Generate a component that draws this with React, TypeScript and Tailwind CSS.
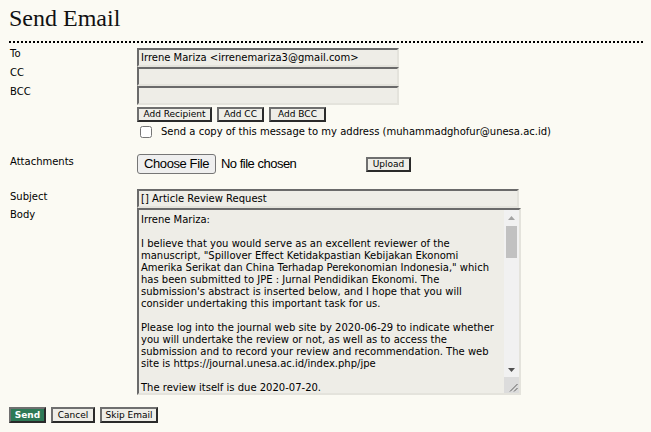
import { useState } from 'react';

const bodyText = `Irrene Mariza:

I believe that you would serve as an excellent reviewer of the
manuscript, "Spillover Effect Ketidakpastian Kebijakan Ekonomi
Amerika Serikat dan China Terhadap Perekonomian Indonesia," which
has been submitted to JPE : Jurnal Pendidikan Ekonomi. The
submission's abstract is inserted below, and I hope that you will
consider undertaking this important task for us.

Please log into the journal web site by 2020-06-29 to indicate whether
you will undertake the review or not, as well as to access the
submission and to record your review and recommendation. The web
site is https://journal.unesa.ac.id/index.php/jpe

The review itself is due 2020-07-20.

If you do not have your username and password for the journal's
web site, you can use this link to reset your password (which
will then be emailed to you along with your username).
https://journal.unesa.ac.id/index.php/jpe/login/resetPassword

Submission URL:
https://journal.unesa.ac.id/index.php/jpe/reviewer/submission

Thank you for considering this request.

Muhammad Ghofur
Universitas Negeri Surabaya
muhammadghofur@unesa.ac.id

"Spillover Effect Ketidakpastian Kebijakan Ekonomi Amerika
Serikat dan China Terhadap Perekonomian Indonesia"

Penelitian ini bertujuan untuk menganalisis spillover effect
ketidakpastian kebijakan ekonomi Amerika Serikat dan China
terhadap perekonomian Indonesia.
`;

const label = "w-[128px] shrink-0 pl-[1px] text-[10px] leading-[12px] text-black";
const field =
  "h-[19px] border-2 border-t-[#6a6a6a] border-l-[#6a6a6a] border-r-[#e4e3dc] border-b-[#e4e3dc] bg-[#eeede7] px-[2px] text-[10px] leading-[12px] text-black outline-none font-['DejaVu_Sans',sans-serif]";
const btn =
  "h-[15px] border-2 border-t-[#6f6f6f] border-l-[#6f6f6f] border-r-[#2a2a2a] border-b-[#2a2a2a] bg-[#eeede7] text-center text-[9px] leading-[11px] text-black font-['DejaVu_Sans',sans-serif]";

// fake classic scrollbar drawn over the textarea's right edge
function ScrollBar() {
  return (
    <div className="absolute top-[2px] bottom-[2px] right-[2px] flex w-[15px] flex-col bg-[#f1f1f1]">
      <div className="flex h-[15px] items-center justify-center">
        <svg width="7" height="4" viewBox="0 0 7 4">
          <path d="M3.5 0 L7 4 L0 4 Z" fill="#a3a3a3" />
        </svg>
      </div>
      <div className="flex-1 px-[2px] pt-[1px]">
        <div className="h-[32px] bg-[#c1c1c1]" />
      </div>
      <div className="flex h-[15px] items-center justify-center">
        <svg width="7" height="4" viewBox="0 0 7 4">
          <path d="M0 0 L7 0 L3.5 4 Z" fill="#505050" />
        </svg>
      </div>
      <div className="relative h-[16px] bg-[#dcdcdc]">
        <svg className="absolute right-[1px] bottom-[1px]" width="9" height="9" viewBox="0 0 9 9">
          <path d="M8.5 1 L1 8.5 M8.5 5 L5 8.5" stroke="#5f5f5f" strokeWidth="1" />
        </svg>
      </div>
    </div>
  );
}

export default function App() {
  const [to, setTo] = useState('Irrene Mariza <irrenemariza3@gmail.com>');
  const [subject, setSubject] = useState('[] Article Review Request');
  const [body, setBody] = useState(bodyText);

  return (
    <div className="min-h-screen bg-[#fbfaf3] pl-[9px] pr-[8px] font-['DejaVu_Sans',sans-serif] text-black">
      {/* Title */}
      <h2 className="pt-[6px] pb-[11px] border-b-2 border-dotted border-black font-['Liberation_Serif',serif] text-[24px] leading-[24px] font-normal text-[#111]">
        Send Email
      </h2>

      <div className="mt-[5px]">
        {/* Recipients */}
        <div className="flex">
          <div className={label}>To</div>
          <input className={`${field} w-[262px]`} value={to} onChange={(e) => setTo(e.target.value)} />
        </div>
        <div className="flex">
          <div className={label}>CC</div>
          <input className={`${field} w-[262px]`} />
        </div>
        <div className="flex">
          <div className={label}>BCC</div>
          <input className={`${field} w-[262px]`} />
        </div>
        <div className="flex">
          <div className="w-[128px] shrink-0" />
          <div>
            <div className="mt-[2px] flex gap-[5px]">
              <button className={`${btn} w-[75px]`}>Add Recipient</button>
              <button className={`${btn} w-[47px]`}>Add CC</button>
              <button className={`${btn} w-[57px]`}>Add BCC</button>
            </div>
            <label className="mt-[4px] flex items-center text-[10px] leading-[12px]">
              <input type="checkbox" className="m-0 ml-[3px] h-[12px] w-[12px]" />
              <span className="ml-[9px]">Send a copy of this message to my address (muhammadghofur@unesa.ac.id)</span>
            </label>
          </div>
        </div>

        {/* Attachments */}
        <div className="mt-[16px] flex">
          <div className={`${label} pt-[2px]`}>Attachments</div>
          <div className="flex items-center">
            <button className="h-[20px] rounded-[3px] border border-[#767676] bg-[#efefef] px-[6px] font-['Liberation_Sans',sans-serif] text-[13px] leading-[16px] tracking-[-0.4px] text-black">
              Choose File
            </button>
            <span className="ml-[5px] w-[145px] font-['Liberation_Sans',sans-serif] text-[13px] tracking-[-0.5px] text-black">
              No file chosen
            </span>
            <button className={`${btn} mt-[1px] w-[45px]`}>Upload</button>
          </div>
        </div>

        {/* Subject & body */}
        <div className="mt-[15px] flex">
          <div className={`${label} pt-[2px]`}>Subject</div>
          <input
            className={`${field} w-[382px]`}
            value={subject}
            onChange={(e) => setSubject(e.target.value)}
          />
        </div>
        <div className="flex">
          <div className={`${label} pt-[1px]`}>Body</div>
          <div className="relative h-[187px] w-[384px]">
            <textarea
              wrap="off"
              value={body}
              onChange={(e) => setBody(e.target.value)}
              className="block h-full w-full resize-none overflow-hidden border-2 border-t-[#6a6a6a] border-l-[#6a6a6a] border-r-[#e4e3dc] border-b-[#e4e3dc] bg-[#eeede7] pt-[4px] pl-[2px] pr-[17px] pb-[2px] font-['DejaVu_Sans',sans-serif] text-[10px] leading-[12px] text-black outline-none"
            />
            <ScrollBar />
          </div>
        </div>

        {/* Actions */}
        <div className="mt-[12px] flex gap-[5px]">
          <button className="h-[16px] w-[37px] border-2 border-t-[#6f6f6f] border-l-[#6f6f6f] border-r-[#2a2a2a] border-b-[#2a2a2a] bg-[#2e7a56] text-center text-[9px] font-bold leading-[12px] text-white">
            Send
          </button>
          <button className={`${btn} h-[16px] w-[44px]`}>Cancel</button>
          <button className={`${btn} h-[16px] w-[58px]`}>Skip Email</button>
        </div>
      </div>
    </div>
  );
}
